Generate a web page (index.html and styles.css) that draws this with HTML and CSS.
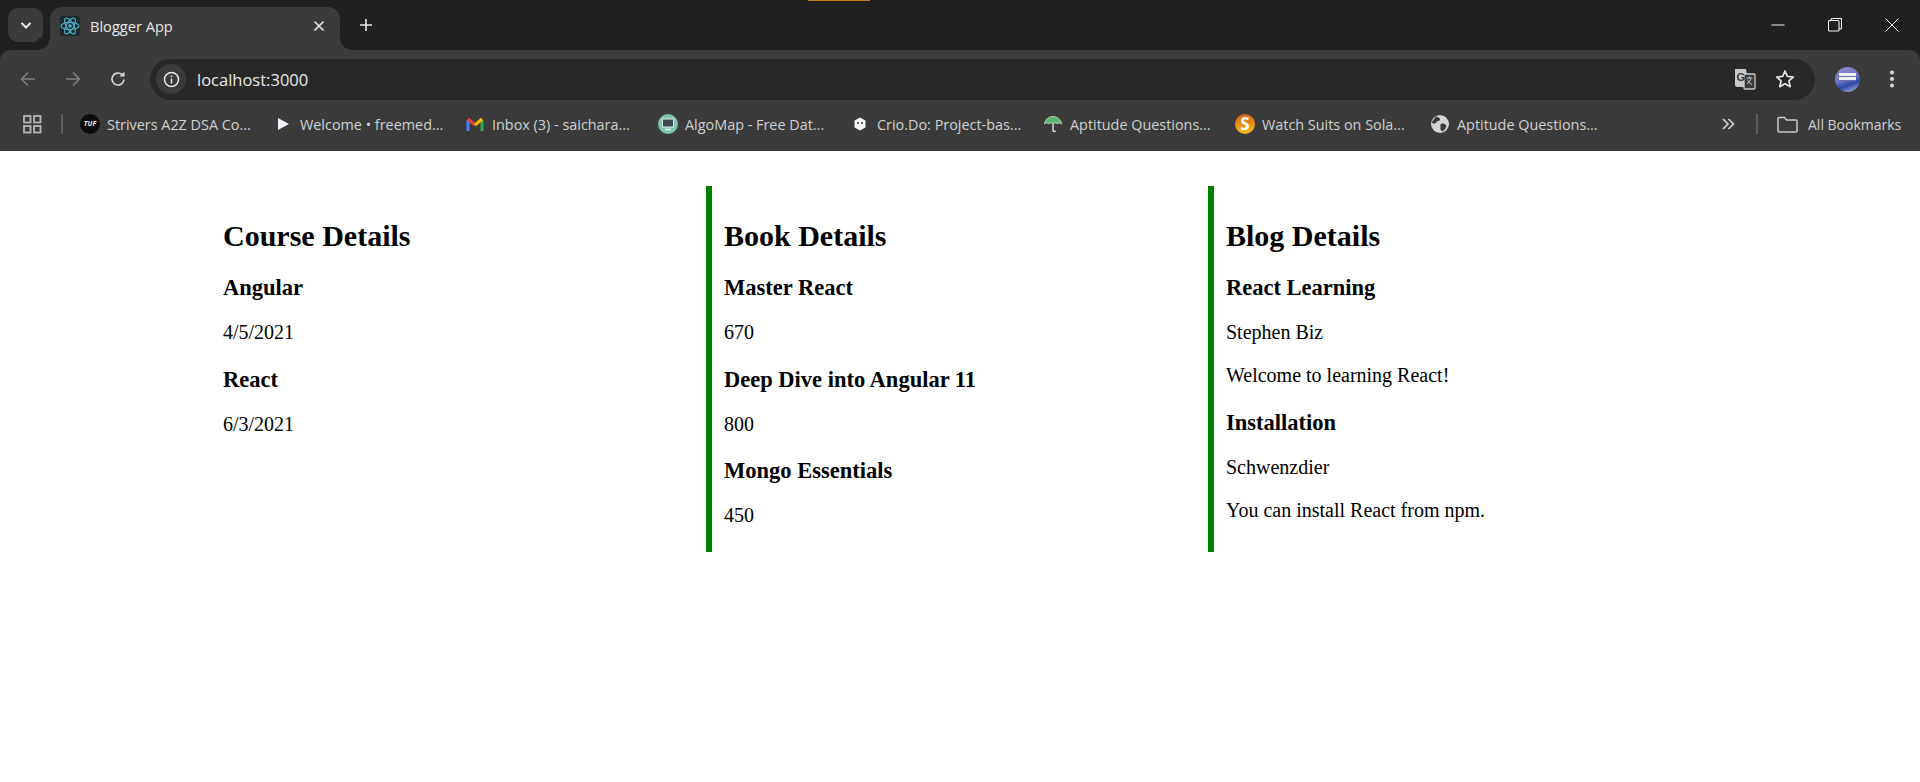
FILE: index.html
```html
<!DOCTYPE html>
<html lang="en">
<head>
    <meta charset="UTF-8">
    <meta name="viewport" content="width=device-width, initial-scale=1.0">
    <title>Blogger App</title>
    <link rel="stylesheet" href="styles.css">
</head>
<body>

<div class="browser">
    <div class="tab-strip">
        <div class="tab-search">
            <svg width="14" height="14" viewBox="0 0 14 14"><path d="M2.500 5l4.500 4.500L11.500 5" fill="none" stroke="#e8e8e8" stroke-width="2"/></svg>
        </div>
        <div class="tab">
            <span class="tab-icon">
                <svg width="20" height="20" viewBox="0 0 20 20" fill="none" stroke="#4fb4cc" stroke-width="1.100">
                    <ellipse cx="10" cy="10" rx="9" ry="3.600"/>
                    <ellipse cx="10" cy="10" rx="9" ry="3.600" transform="rotate(60 10 10)"/>
                    <ellipse cx="10" cy="10" rx="9" ry="3.600" transform="rotate(120 10 10)"/>
                    <circle cx="10" cy="10" r="1.800" fill="#4fb4cc" stroke="none"/>
                </svg>
            </span>
            <span class="tab-title">Blogger App</span>
            <svg class="tab-close" width="12" height="12" viewBox="0 0 12 12"><path d="M1.500 1.500l9 9M10.500 1.500l-9 9" stroke="#e8e8e8" stroke-width="1.600"/></svg>
        </div>
        <svg class="new-tab" width="14" height="14" viewBox="0 0 14 14"><path d="M7 1v12M1 7h12" stroke="#e8e8e8" stroke-width="1.600"/></svg>
        <div class="strip-space"><span class="orange-mark"></span></div>
        <div class="window-btns">
            <svg width="14" height="14" viewBox="0 0 14 14"><path d="M0.500 7h13" stroke="#f0f0f0" stroke-width="1"/></svg>
            <svg width="14" height="14" viewBox="0 0 14 14" fill="none" stroke="#f0f0f0" stroke-width="1.100"><rect x="0.500" y="2.500" width="10.500" height="10.500" rx="1"/><path d="M3 2.500V1.500a1 1 0 0 1 1-1h8.500a1 1 0 0 1 1 1V10a1 1 0 0 1-1 1H11"/></svg>
            <svg width="14" height="14" viewBox="0 0 14 14"><path d="M0.500 0.500l13 13M13.500 0.500l-13 13" stroke="#f0f0f0" stroke-width="1"/></svg>
        </div>
    </div>

    <div class="toolbar">
        <svg class="nav-icon" width="18" height="18" viewBox="0 0 18 18" fill="none" stroke="#7d7d7d" stroke-width="1.600"><path d="M16 9H2.500M9 2.500L2.500 9L9 15.500"/></svg>
        <svg class="nav-icon" width="18" height="18" viewBox="0 0 18 18" fill="none" stroke="#7d7d7d" stroke-width="1.600"><path d="M2 9h13.500M9 2.500L15.500 9L9 15.500"/></svg>
        <svg class="nav-icon" width="18" height="18" viewBox="0 0 18 18" fill="none" stroke="#d8d8d8" stroke-width="1.700"><path d="M15 9.500A6 6 0 1 1 13 4.500"/><path d="M15.500 1.500v5h-5" fill="#d8d8d8" stroke="none"/></svg>
        <div class="omnibox">
            <span class="site-info">
                <svg width="17" height="17" viewBox="0 0 17 17" fill="none" stroke="#e8e8e8" stroke-width="1.500"><circle cx="8.500" cy="8.500" r="7"/><path d="M8.500 7.500v5M8.500 4.500v1.600"/></svg>
            </span>
            <span class="url">localhost:3000</span>
            <svg class="translate" width="22" height="22" viewBox="0 0 22 22">
                <path d="M1 1h11l3 18H3a2 2 0 0 1-2-2z" fill="#c8c8c8"/>
                <rect x="10" y="6" width="11" height="15" rx="1" fill="#3a3a3a" stroke="#c8c8c8" stroke-width="1.300"/>
                <text x="2.500" y="13" class="translate-g">G</text>
                <path d="M12.500 10h6M15.500 8.500v1.500M17 10c-.5 3-2 5-4 6M13.500 11.500c.5 2 2.500 4 4.500 5" fill="none" stroke="#c8c8c8" stroke-width="1"/>
            </svg>
            <svg class="star" width="20" height="20" viewBox="0 0 20 20"><path d="M10 2l2.400 5.400 5.900.6-4.400 3.900 1.300 5.800L10 14.700l-5.200 3 1.300-5.800L1.700 8l5.900-.6z" fill="none" stroke="#e3e3e3" stroke-width="1.700" stroke-linejoin="round"/></svg>
        </div>
        <span class="avatar"><span class="avatar-mark"></span></span>
        <svg class="menu" width="6" height="18" viewBox="0 0 6 18" fill="#d8d8d8"><circle cx="3" cy="2.500" r="2"/><circle cx="3" cy="9" r="2"/><circle cx="3" cy="15.500" r="2"/></svg>
    </div>

    <div class="bookmarks">
        <svg class="apps" width="19" height="19" viewBox="0 0 19 19" fill="none" stroke="#b5b5b5" stroke-width="1.800"><rect x="1" y="1" width="6.500" height="6.500"/><rect x="11" y="1" width="6.500" height="6.500"/><rect x="1" y="11" width="6.500" height="6.500"/><rect x="11" y="11" width="6.500" height="6.500"/></svg>
        <span class="bar-sep"></span>
        <div class="bookmark bm-1">
            <span class="tuf-icon">TUF</span>
            <span>Strivers A2Z DSA Co...</span>
        </div>
        <div class="bookmark bm-2">
            <svg width="20" height="20" viewBox="0 0 20 20"><path d="M5 4l11 6-11 6z" fill="#f4f0fa"/></svg>
            <span>Welcome • freemed...</span>
        </div>
        <div class="bookmark bm-3">
            <svg width="20" height="20" viewBox="0 0 20 20" fill="none" stroke-width="3"><path d="M3 17V6" stroke="#4285f4"/><path d="M17 17V6" stroke="#34a853"/><path d="M3 5l7 6" stroke="#ea4335"/><path d="M10 11l7-6" stroke="#fbbc04"/></svg>
            <span>Inbox (3) - saichara...</span>
        </div>
        <div class="bookmark bm-4">
            <svg width="20" height="20" viewBox="0 0 20 20"><circle cx="10" cy="10" r="10" fill="#7cc4aa"/><rect x="4.500" y="5" width="11" height="8" fill="#3b4a55" stroke="#e4eeea"/><path d="M7 15.500h6" stroke="#e4eeea" stroke-width="1.500"/></svg>
            <span>AlgoMap - Free Dat...</span>
        </div>
        <div class="bookmark bm-5">
            <svg width="20" height="20" viewBox="0 0 20 20"><path d="M10 3.500l5.500 3v7L10 16.500l-5.500-3v-7z" fill="#f4f4f4"/><circle cx="8" cy="9" r="1" fill="#3a3a3a"/><circle cx="12" cy="9" r="1" fill="#3a3a3a"/></svg>
            <span>Crio.Do: Project-bas...</span>
        </div>
        <div class="bookmark bm-6">
            <svg width="20" height="20" viewBox="0 0 20 20"><path d="M1.500 10C2 5 6 2.500 10 2.500S18 5 18.500 10c-1.500-1.500-3-1.500-4 0-1.500-1.500-3.500-1.500-4.500 0-1-1.500-3-1.500-4.500 0-1-1.500-2.500-1.500-4 0z" fill="#5fb56f" stroke="#d5ecd8" stroke-width=".7"/><path d="M10 10v6.500c0 1.500 2.500 1.500 2.500 0" fill="none" stroke="#d5ecd8" stroke-width="1.400"/></svg>
            <span>Aptitude Questions...</span>
        </div>
        <div class="bookmark bm-7">
            <span class="suits-icon">S</span>
            <span>Watch Suits on Sola...</span>
        </div>
        <div class="bookmark bm-8">
            <svg width="20" height="20" viewBox="0 0 20 20"><circle cx="10" cy="10" r="9" fill="#d4d4d4"/><path d="M6 2.500c2 1 4 1 4 3s-3 1-4 3-3 1-4.500 0zM11 10c2-1 4 0 5 1s-1 5-3 6-3-2-2.500-3.500S9.500 11 11 10z" fill="#3a3a3a"/></svg>
            <span>Aptitude Questions...</span>
        </div>
        <svg class="more" width="14" height="12" viewBox="0 0 14 12" fill="none" stroke="#d4d4d4" stroke-width="1.600"><path d="M2 1l5 5-5 5M7.500 1l5 5-5 5"/></svg>
        <span class="bar-sep sep-right"></span>
        <svg class="folder" width="21" height="17" viewBox="0 0 21 17" fill="none" stroke="#c8c8c8" stroke-width="1.500"><path d="M1 15V2.500a1 1 0 0 1 1-1h5.500l2 2.500h9.500a1 1 0 0 1 1 1V15a1 1 0 0 1-1 1H2a1 1 0 0 1-1-1z"/></svg>
        <span class="all-bookmarks">All Bookmarks</span>
    </div>
</div>

<div class="page">
    <div class="details">
        <section class="column">
            <h1>Course Details</h1>
            <h3>Angular</h3>
            <p>4/5/2021</p>
            <h3>React</h3>
            <p>6/3/2021</p>
        </section>
        <section class="column bordered">
            <h1>Book Details</h1>
            <h3>Master React</h3>
            <p>670</p>
            <h3>Deep Dive into Angular 11</h3>
            <p>800</p>
            <h3>Mongo Essentials</h3>
            <p>450</p>
        </section>
        <section class="column bordered">
            <h1>Blog Details</h1>
            <h3>React Learning</h3>
            <p>Stephen Biz</p>
            <p>Welcome to learning React!</p>
            <h3>Installation</h3>
            <p>Schwenzdier</p>
            <p>You can install React from npm.</p>
        </section>
    </div>
</div>

</body>
</html>
```

FILE: styles.css
```css
body {
    margin: 0;
    background-color: #fff;
    font-family: "Liberation Serif", serif;
    color: #000;
}

/* browser chrome */
.browser {
    background-color: #202020;
    font-family: "Open Sans", "Noto Sans", sans-serif;
}
.tab-strip {
    height: 50px;
    display: flex;
    align-items: center;
    padding-left: 8px;
}
.tab-search {
    width: 35px;
    height: 34px;
    margin-top: -1px;
    border-radius: 10px;
    background-color: #3b3b3b;
    display: flex;
    align-items: center;
    justify-content: center;
}
.tab {
    position: relative;
    width: 290px;
    height: 43px;
    margin: 7px 0 0 7px;
    padding: 0 12px 6px 10px;
    box-sizing: border-box;
    border-radius: 12px 12px 0 0;
    background-color: #3b3b3b;
    display: flex;
    align-items: center;
    color: #e8e8e8;
    font-size: 14.600px;
}
/* the little curves where the tab meets the toolbar */
.tab::before,
.tab::after {
    content: "";
    position: absolute;
    bottom: 0;
    width: 12px;
    height: 12px;
}
.tab::before {
    left: -12px;
    background: radial-gradient(circle at 0 0, #202020 11.500px, #3b3b3b 12px);
}
.tab::after {
    right: -12px;
    background: radial-gradient(circle at 100% 0, #202020 11.500px, #3b3b3b 12px);
}
.tab-icon {
    width: 20px;
    height: 20px;
    background-color: #1c2b30;
    border-radius: 2px;
    margin-right: 10px;
}
.tab-title {
    flex: 1;
}
.tab-close {
    margin-right: 3px;
}
.new-tab {
    margin-left: 19px;
}
.strip-space {
    flex: 1;
    align-self: flex-start;
    padding-left: 435px;
}
.orange-mark {
    display: block;
    width: 62px;
    height: 1px;
    background-color: #b8761e;
}
.window-btns {
    display: flex;
    gap: 43px;
    padding-right: 21px;
}
.toolbar {
    height: 58px;
    background-color: #3b3b3b;
    border-radius: 10px 10px 0 0;
    display: flex;
    align-items: center;
    padding: 0 25px 0 19px;
    box-sizing: border-box;
}
.nav-icon {
    margin-right: 27px;
}
.nav-icon:nth-child(3) {
    margin-right: 23px;
}
.omnibox {
    flex: 1;
    height: 41px;
    border-radius: 21px;
    background-color: #282828;
    display: flex;
    align-items: center;
    padding: 0 20px 0 6px;
    margin-right: 20px;
}
.site-info {
    width: 30px;
    height: 30px;
    border-radius: 50%;
    background-color: #3b3b3b;
    display: flex;
    align-items: center;
    justify-content: center;
    margin-right: 11px;
}
.url {
    flex: 1;
    color: #e8e8e8;
    font-size: 16.500px;
}
.translate {
    margin-right: 19px;
}
.translate-g {
    font-family: "Liberation Sans", sans-serif;
    font-size: 11px;
    font-weight: bold;
    fill: #3a3a3a;
}
.avatar {
    width: 25px;
    height: 25px;
    border-radius: 50%;
    background: linear-gradient(160deg, #8f8fd0 0%, #7474c4 45%, #2b4ba5 68%, #c8c6e6 100%);
    display: flex;
    justify-content: center;
    padding-top: 6px;
    box-sizing: border-box;
    margin-right: 29px;
}
.avatar-mark {
    display: block;
    width: 17px;
    height: 8px;
    background: repeating-linear-gradient(#eeeef6 0 3px, #6c6cb0 3px 4px);
}
.bookmarks {
    height: 43px;
    background-color: #3b3b3b;
    display: flex;
    align-items: center;
    padding: 0 18px 11px 23px;
    box-sizing: border-box;
    color: #d0d0d0;
    font-size: 14.400px;
    white-space: nowrap;
}
.apps {
    margin-right: 19px;
}
.bar-sep {
    width: 2px;
    height: 20px;
    background-color: #5f5f5f;
    margin-right: 17px;
}
.bookmark {
    display: flex;
    align-items: center;
    gap: 7px;
}
.bm-1 { width: 193px; }
.bm-2 { width: 192px; }
.bm-3 { width: 193px; }
.bm-4 { width: 192px; }
.bm-5 { width: 193px; }
.bm-6 { width: 192px; }
.bm-7 { width: 195px; }
.bm-8 { width: 291px; }
.tuf-icon {
    width: 20px;
    height: 20px;
    border-radius: 50%;
    background-color: #0c0c0c;
    color: #eee;
    font-size: 7px;
    font-weight: bold;
    font-style: italic;
    line-height: 20px;
    text-align: center;
}
.suits-icon {
    width: 20px;
    height: 20px;
    border-radius: 50%;
    background: linear-gradient(#d9651a, #f9bc1c);
    color: #fff;
    font-size: 17px;
    font-weight: bold;
    line-height: 20px;
    text-align: center;
}
.more {
    margin-right: 21px;
}
.sep-right {
    margin-right: 19px;
}
.folder {
    margin-right: 10px;
}
.all-bookmarks {
    font-size: 14px;
}

/* page content */
.details {
    display: flex;
    padding: 35px 0 0 213px;
}
.column {
    flex: none;
    width: 502px;
    height: 366px;
    box-sizing: border-box;
    padding: 0 10px 0 12px;
}
.bordered {
    border-left: 6px solid green;
}
.column:first-child {
    width: 493px;
    padding-left: 10px;
}
h1 {
    font-size: 30px;
    margin: 33px 0 21px;
}
h3 {
    font-size: 22.500px;
    margin: 22.700px 0 20px;
}
h1 + h3 {
    margin-top: 22px;
}
p {
    font-size: 20px;
    margin: 20px 0;
}
```
